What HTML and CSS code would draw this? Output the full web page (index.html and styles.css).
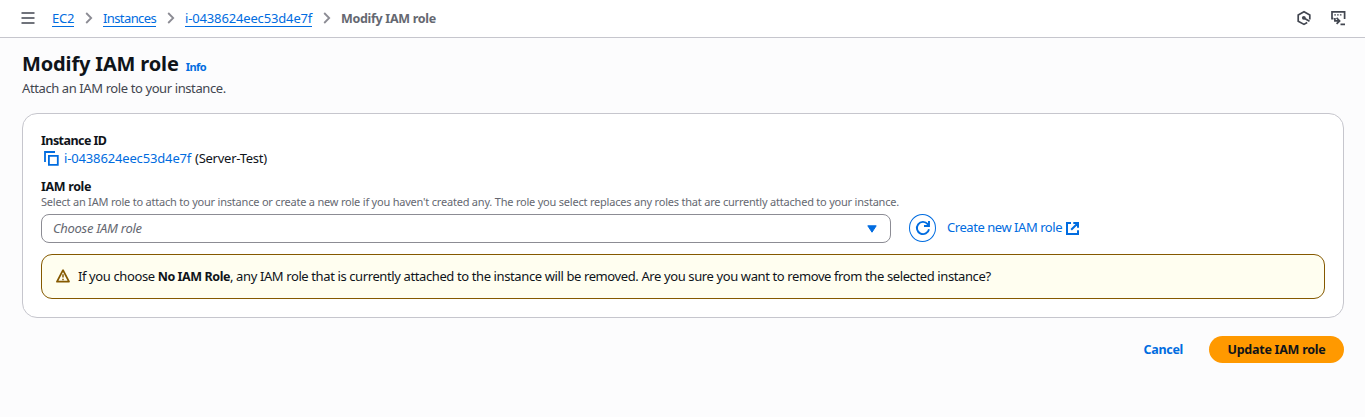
FILE: index.html
```html
<!DOCTYPE html>
<html lang="en">
<head>
<meta charset="utf-8">
<title>Modify IAM role</title>
<link rel="stylesheet" href="styles.css">
</head>
<body>
<header class="topbar">
  <svg class="menu" width="14" height="14" viewBox="0 0 14 14"><path d="M.5 2h13M.5 7h13M.5 12h13"/></svg>
  <nav class="crumbs">
    <a class="crumb ec2" href="#">EC2</a>
    <svg class="chev" width="8" height="12" viewBox="0 0 8 12"><path d="M1.2 1l5 5-5 5"/></svg>
    <a class="crumb instances" href="#">Instances</a>
    <svg class="chev" width="8" height="12" viewBox="0 0 8 12"><path d="M1.2 1l5 5-5 5"/></svg>
    <a class="crumb instance" href="#">i-0438624eec53d4e7f</a>
    <svg class="chev" width="8" height="12" viewBox="0 0 8 12"><path d="M1.2 1l5 5-5 5"/></svg>
    <span class="current">Modify IAM role</span>
  </nav>
  <div class="tools">
    <svg width="14" height="16" viewBox="0 0 14 16"><path d="M12.8 9.6V4.9L7 1.7 1.2 4.9v6.3L7 14.4l3.2-1.8M7.3 8.2l5.2 3"/><circle class="dot" cx="6.8" cy="7.8" r="1.9"/></svg>
    <svg width="15" height="16" viewBox="0 0 15 16"><path d="M1 9.5V1.9h12.6V9M1 8.6h1.5M3.9 8v2.9h3.8M5.6 7.9l3 3-3 3M9.5 14.3H14"/><path class="dots" d="M3.3 4.8h1.6m1.2 0h1.6m1.2 0h1.6"/></svg>
  </div>
</header>
<main class="page">
  <div class="heading"><h1>Modify IAM role</h1><a class="info" href="#">Info</a></div>
  <p class="lead">Attach an IAM role to your instance.</p>
  <section class="card">
    <div class="label instance-label">Instance ID</div>
    <div class="value">
      <svg class="copy" width="15" height="15" viewBox="0 0 15 15"><path d="M1 11V1h10M4.9 4.9h8.9v8.9H4.9z"/></svg>
      <a class="instance" href="#">i-0438624eec53d4e7f</a>
      <span class="name">(Server-Test)</span>
    </div>
    <div class="label">IAM role</div>
    <div class="hint">Select an IAM role to attach to your instance or create a new role if you haven't created any. The role you select replaces any roles that are currently attached to your instance.</div>
    <div class="role-row">
      <div class="select">
        <span>Choose IAM role</span>
        <svg width="10" height="8" viewBox="0 0 10 8"><path d="M.8.8h8.4L5 7.2z"/></svg>
      </div>
      <button class="refresh" aria-label="Refresh">
        <svg width="16" height="16" viewBox="0 0 16 16"><path d="M14 9.2A6.1 6.1 0 1 1 12.7 4.1L14 5.5M14 1v5H9"/></svg>
      </button>
      <a class="create" href="#"><span>Create new IAM role</span>
        <svg width="13" height="13" viewBox="0 0 13 13"><path d="M5 1H1v11h11V8.3M7.3 1H12v4.7M11.8 1.2L5.2 7.8"/></svg></a>
    </div>
    <div class="alert">
      <svg width="14" height="14" viewBox="0 0 14 14"><path d="M7 1.2L1 12.6h12z"/><path class="mark" d="M7 5.2v3.4M7 9.7v1.5"/></svg>
      <p><span>If you choose </span><b>No IAM Role</b><span>, any IAM role that is currently attached to the instance will be removed. Are you sure you want to remove from the selected instance?</span></p>
    </div>
  </section>
  <div class="actions">
    <button class="cancel">Cancel</button>
    <button class="update">Update IAM role</button>
  </div>
</main>
</body>
</html>
```
FILE: styles.css
```css
* { box-sizing: border-box; }
body {
  margin: 0;
  min-height: 417px;
  background: #fcfcfd;
  color: #0f141a;
  font: 13px/18px "Noto Sans", sans-serif;
}
h1, p { margin: 0; }
a { color: #006ce0; text-decoration: none; }
button { font: inherit; padding: 0; border: 0; background: none; }
svg { display: block; flex: none; fill: none; stroke: currentColor; stroke-width: 2; }

.topbar {
  display: flex;
  align-items: flex-start;
  height: 38px;
  padding: 9px 19px 0 21px;
  background: #fff;
  border-bottom: 1px solid #c6c6cd;
  color: #424650;
}
.menu { margin: 2px 17px 0 0; stroke-width: 1.7; }
.crumbs { display: flex; flex: 1; }
.crumb { height: 18px; border-bottom: 1px solid #006ce0; line-height: 18px; white-space: nowrap; }
.ec2 { width: 22px; letter-spacing: -.2px; }
.instances { width: 53px; letter-spacing: -.6px; }
.instance { width: 127px; letter-spacing: -.15px; white-space: nowrap; }
.chev { margin: 3px 10px 0 11px; color: #8c8c94; stroke-width: 1.8; }
.current { color: #656871; font-weight: 700; font-size: 12.5px; line-height: 20px; letter-spacing: -.3px; }
.tools { display: flex; gap: 20px; padding-top: 1px; }
.tools svg { stroke-width: 1.7; }
.tools .dot { fill: currentColor; stroke: none; }
.tools .dots { stroke-width: 1.3; }

.page { padding: 14px 21px 0 22px; }
.heading { display: flex; align-items: baseline; gap: 7px; height: 24px; }
h1 { font-size: 20px; line-height: 24px; letter-spacing: -.15px; }
.info { font-size: 11px; font-weight: 700; letter-spacing: -.55px; }
.lead { margin-top: 3px; color: #424650; letter-spacing: -.4px; }

.card {
  height: 205px;
  margin-top: 16px;
  padding: 18px 18px 0;
  background: #fff;
  border: 1px solid #c6c6cd;
  border-radius: 15px;
}
.label { height: 17px; font-size: 12.5px; font-weight: 700; letter-spacing: -.35px; }
.instance-label { letter-spacing: -.55px; }
.value { display: flex; margin-bottom: 12px; height: 17px; }
.copy { margin: 2px 5px 0 3px; color: #006ce0; stroke-width: 1.8; }
.name { margin-left: 4px; letter-spacing: -.25px; }
.hint { height: 19px; font-size: 11px; line-height: 14px; color: #656871; letter-spacing: -.21px; white-space: nowrap; }
.role-row { display: flex; align-items: center; height: 29px; }
.select {
  display: flex;
  align-items: center;
  justify-content: space-between;
  width: 850px;
  height: 29px;
  padding: 0 13px 0 11px;
  border: 1px solid #8c8c94;
  border-radius: 8px;
  color: #656871;
  font-style: italic;
  letter-spacing: -.3px;
}
.select span { margin-top: -2px; }
.select svg { fill: #006ce0; stroke: #006ce0; stroke-width: 1; }
.refresh {
  display: grid;
  place-items: center;
  width: 27px;
  height: 28px;
  margin: -2px 11px 0 18px;
  border: 1px solid #006ce0;
  border-radius: 50%;
  color: #006ce0;
}
.refresh svg { stroke-width: 1.9; }
.create { display: flex; align-items: center; gap: 4px; margin-top: -3px; letter-spacing: -.45px; }
.create svg { margin-top: 2px; }
.alert {
  display: flex;
  align-items: center;
  gap: 8px;
  height: 45px;
  margin-top: 11px;
  padding: 0 14px;
  background: #fffef0;
  border: 1px solid #855900;
  border-radius: 11px;
  letter-spacing: -.39px;
  white-space: nowrap;
}
.alert svg { margin-top: -1px; color: #855900; stroke-width: 1.8; stroke-linejoin: round; }
.alert .mark { stroke-width: 1.5; }
.alert b { font-size: 12.5px; letter-spacing: -.42px; }

.actions { display: flex; justify-content: flex-end; gap: 26px; margin-top: 18px; font-size: 12.5px; font-weight: 700; }
.cancel { color: #006ce0; letter-spacing: -.3px; }
.update { width: 135px; height: 27px; border-radius: 14px; background: #ff9900; color: #0f141a; letter-spacing: -.25px; }
```
